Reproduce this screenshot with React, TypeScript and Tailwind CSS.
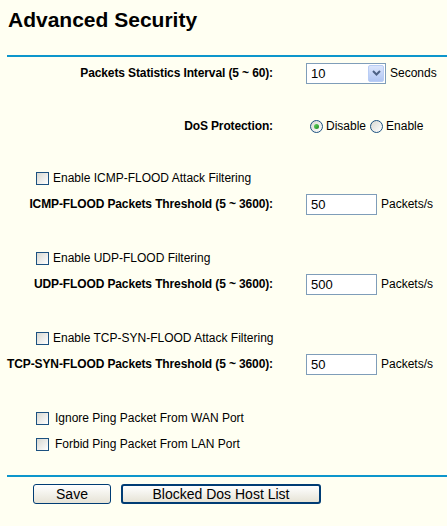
import React from 'react';

const font = { fontFamily: '"Liberation Sans", Arial, sans-serif' };

const CheckBox: React.FC = () => (
  <span className="inline-block w-[13px] h-[13px] shrink-0 border border-[#1c5180] bg-gradient-to-br from-[#d8d8d2] to-[#ffffff]" />
);

const Radio: React.FC<{ checked?: boolean }> = ({ checked }) => (
  <span className="inline-flex items-center justify-center w-[13px] h-[13px] shrink-0 rounded-full border border-[#1c5180] bg-gradient-to-br from-[#d8d8d2] to-[#ffffff]">
    {checked && <span className="w-[5px] h-[5px] rounded-full bg-gradient-to-br from-[#5fd45f] to-[#1f8a1f]" />}
  </span>
);

const TextBox: React.FC<{ value: string }> = ({ value }) => (
  <div className="w-[71px] h-[21px] border border-[#7f9db9] bg-white pl-[4px] flex items-center text-[13px] leading-none">
    {value}
  </div>
);

const LabelRow: React.FC<{ label: string; children: React.ReactNode }> = ({ label, children }) => (
  <div className="h-[26px] flex items-center">
    <div className="w-[273px] text-right font-bold text-[12px] tracking-[-0.12px] whitespace-nowrap">{label}</div>
    <div className="ml-[33px] flex items-center">{children}</div>
  </div>
);

const CheckRow: React.FC<{ label: string; gap?: string }> = ({ label, gap = 'gap-[4px]' }) => (
  <div className={`h-[26px] flex items-center pl-[36px] ${gap}`}>
    <CheckBox />
    <span className="text-[12px] whitespace-nowrap">{label}</span>
  </div>
);

const Threshold: React.FC<{ label: string; value: string }> = ({ label, value }) => (
  <LabelRow label={label}>
    <TextBox value={value} />
    <span className="ml-[4px] text-[12px]">Packets/s</span>
  </LabelRow>
);

const App: React.FC = () => {
  return (
    <div className="w-[447px] h-[526px] bg-[#fffff2] text-black overflow-hidden" style={font}>
      {/* Title */}
      <div className="pt-[8px] pl-[8px] h-[55px]">
        <h1 className="text-[21px] leading-[24px] font-bold">Advanced Security</h1>
      </div>
      <div className="ml-[7px] h-[2px] bg-[#0d96cc]" />

      <div className="pt-[3px]">
        <LabelRow label="Packets Statistics Interval (5 ~ 60):">
          <div className="w-[80px] h-[21px] border border-[#7f9db9] bg-white flex items-center justify-between">
            <span className="pl-[4px] text-[13px] leading-none">10</span>
            <span className="mr-px w-[16px] h-[17px] rounded-[2px] border border-[#b9cdf5] bg-gradient-to-b from-[#dbe5fc] to-[#b1c6f3] flex items-center justify-center">
              <svg width="9" height="6" viewBox="0 0 9 6">
                <path d="M1 1 L4.5 4.5 L8 1" fill="none" stroke="#4d6185" strokeWidth="2" />
              </svg>
            </span>
          </div>
          <span className="ml-[4px] text-[12px]">Seconds</span>
        </LabelRow>

        <div className="h-[27px]" />
        <LabelRow label="DoS Protection:">
          <span className="ml-[4px] flex items-center gap-[3px] text-[12px]">
            <Radio checked />
            <span>Disable</span>
          </span>
          <span className="ml-[4px] flex items-center gap-[3px] text-[12px]">
            <Radio />
            <span>Enable</span>
          </span>
        </LabelRow>

        <div className="h-[26px]" />
        <CheckRow label="Enable ICMP-FLOOD Attack Filtering" />
        <Threshold label="ICMP-FLOOD Packets Threshold (5 ~ 3600):" value="50" />

        <div className="h-[28px]" />
        <CheckRow label="Enable UDP-FLOOD Filtering" />
        <Threshold label="UDP-FLOOD Packets Threshold (5 ~ 3600):" value="500" />

        <div className="h-[28px]" />
        <CheckRow label="Enable TCP-SYN-FLOOD Attack Filtering" />
        <Threshold label="TCP-SYN-FLOOD Packets Threshold (5 ~ 3600):" value="50" />

        <div className="h-[28px]" />
        <CheckRow label="Ignore Ping Packet From WAN Port" gap="gap-[6px]" />
        <CheckRow label="Forbid Ping Packet From LAN Port" gap="gap-[6px]" />
      </div>

      <div className="mt-[18px] ml-[7px] h-[2px] bg-[#0d96cc]" />

      <div className="mt-[7px] pl-[33px] flex gap-[10px]">
        <button className="w-[78px] h-[20px] rounded-[3px] border border-[#003c74] bg-gradient-to-b from-[#ffffff] to-[#e6e3d6] text-[14px] leading-none">
          Save
        </button>
        <button className="w-[200px] h-[20px] rounded-[3px] border-2 border-[#003c74] bg-gradient-to-b from-[#ffffff] to-[#e6e3d6] text-[14px] leading-none">
          Blocked Dos Host List
        </button>
      </div>
    </div>
  );
};

export default App;
